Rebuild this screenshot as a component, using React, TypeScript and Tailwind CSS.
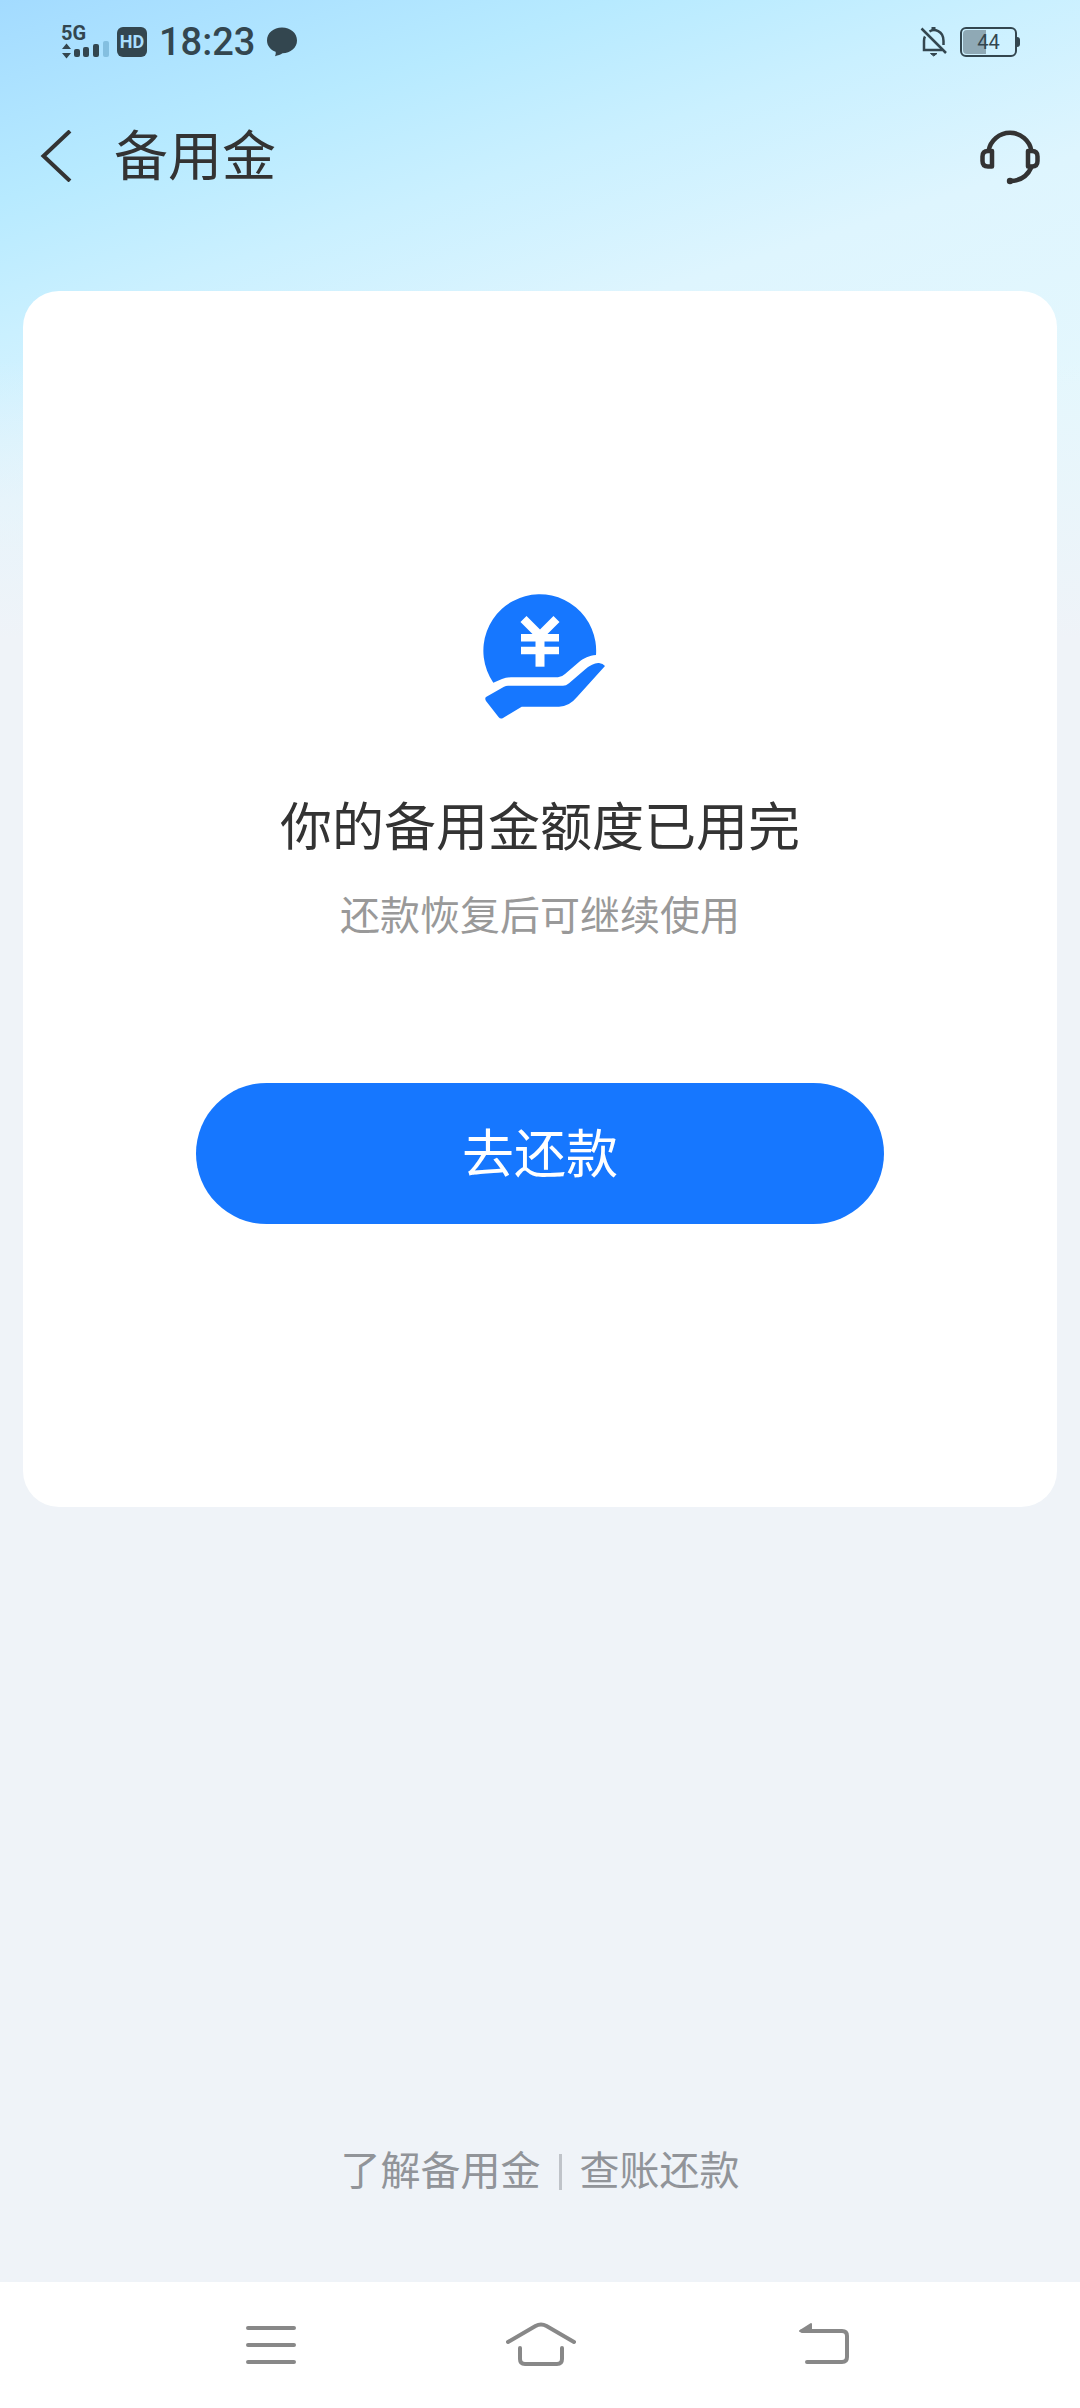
import type { FC } from "react";

const SignalIcon: FC = () => (
  <svg className="h-4 w-12 overflow-visible" viewBox="0 0 48 16" fill="currentColor" aria-hidden="true">
    <path d="M5.5 0.5 10 6H1Z M5.5 15.5 10 10H1Z" />
    <rect x="13" y="6" width="6" height="8" rx="2" />
    <rect x="22" y="4" width="6" height="10" rx="2" />
    <rect x="32" y="1" width="6" height="13" rx="2" />
    <rect x="42" y="-2" width="6" height="16" rx="2" className="fill-[#84bfe0]" />
  </svg>
);

const ChatIcon: FC = () => (
  <svg className="h-[30px] w-[30px]" viewBox="0 0 30 30" fill="currentColor" aria-hidden="true">
    <path d="M15 0.5C23.5 0.5 30 6 30 13.5S23.5 26 15.5 26.3C13.5 27.5 11 28.6 8 29.2 8.8 27.6 8.9 26 8.6 24.8 3.4 22.8 0 18.6 0 13.5 0 6 6.5 0.5 15 0.5Z" />
  </svg>
);

const MutedBellIcon: FC = () => (
  <svg
    className="h-[30px] w-7"
    viewBox="0 0 28 30"
    fill="none"
    stroke="currentColor"
    strokeWidth="2.5"
    aria-hidden="true"
  >
    <path d="M1.5 1.5 26 26" />
    <path d="M5 9.5C4 11 4 12.5 4 14V23H22" />
    <path d="M9.5 4.5C14 1.5 23.5 3.5 23.5 14V18" />
    <path d="M13.5 0V3" strokeWidth="4" />
    <path d="M10.5 26.5H17L13.7 29Z" fill="currentColor" strokeWidth="1" />
  </svg>
);

const BackIcon: FC = () => (
  <svg
    className="h-[52px] w-8"
    viewBox="0 0 32 52"
    fill="none"
    stroke="currentColor"
    strokeWidth="4"
    aria-hidden="true"
  >
    <path d="M30 1 3.5 26 30 51" />
  </svg>
);

const HeadsetIcon: FC = () => (
  <svg
    className="h-[58px] w-[60px]"
    viewBox="0 0 60 58"
    fill="none"
    stroke="currentColor"
    strokeWidth="4.5"
    strokeLinejoin="round"
    aria-hidden="true"
  >
    <path d="M8.5 24A21.8 21.8 0 0 1 51.5 24" />
    <path d="M12 24V39.5H8Q2.5 39.5 2.5 34V29.5Q2.5 24 8 24Z" />
    <path d="M48 24V39.5H52Q57.5 39.5 57.5 34V29.5Q57.5 24 52 24Z" />
    <path d="M51.5 40C47.5 49 40 54 30 54" strokeLinecap="round" />
    <circle cx="30" cy="54" r="3.2" fill="currentColor" stroke="none" />
  </svg>
);

const LoanIcon: FC = () => (
  <svg className="h-32 w-[132px]" viewBox="-9 0 132 128" fill="#1677ff" aria-hidden="true">
    <path d="M10.3 90.7A56.4 56.4 0 1 1 113 63C106 63.5 101 66 96 70L82 82Q78.5 85.3 75 85.3H28Q23 85.3 19 87Z" />
    <path d="M3 105 21 94.7Q23 93.7 25 93.7H80Q83 93.7 86 91.2L102 77.5Q110 70.5 116 71Q120 71.3 122 74L94 105Q86 114.7 76 114.7H38.7L20 126Q17.5 127.5 15.5 125L3 109Q1.5 106.5 3 105Z" />
    <g stroke="#fff" strokeWidth="8.5" fill="none">
      <path d="M40.5 27 57 43.5 73.5 27" />
      <path d="M38 45.8H76M38 58.5H76" strokeWidth="7.5" />
      <path d="M57 42V74.7" strokeWidth="9" />
    </g>
  </svg>
);

const StatusBar: FC = () => (
  <div className="flex h-[84px] items-center justify-between pr-15 pl-[61px] text-[#33464f]">
    <div className="flex items-center">
      <div className="flex w-12 flex-col gap-0.5">
        <span className="text-xl leading-4 font-bold">5G</span>
        <SignalIcon />
      </div>
      <span className="ml-2 flex h-[30px] w-[30px] items-center justify-center rounded-md bg-[#33464f] text-lg leading-none font-bold text-[#a9dfff]">
        HD
      </span>
      <span className="mx-3 text-[38px] leading-none font-medium">18:23</span>
      <ChatIcon />
    </div>
    <div className="flex items-center">
      <MutedBellIcon />
      <div className="relative ml-3 flex h-[30px] w-[57px] items-center justify-center rounded-md border-2 border-current p-px">
        <div className="absolute top-px bottom-px left-px rounded-l-sm bg-[#8fa9b5]" style={{ width: "44%" }} />
        <span className="relative text-xl leading-none">44</span>
      </div>
      <span className="h-2.5 w-[3px] rounded-r-sm bg-current" />
    </div>
  </div>
);

const NavBar: FC = () => (
  <nav className="flex h-[126px] items-center justify-center gap-[210px] bg-white pb-0.5 pl-4 text-[#888]">
    <button type="button" aria-label="菜单">
      <svg className="h-12 w-[50px]" viewBox="0 0 50 48" stroke="currentColor" strokeWidth="4" strokeLinecap="round">
        <path d="M2 8H48M2 25H48M2 42H48" />
      </svg>
    </button>
    <button type="button" aria-label="主页">
      <svg
        className="h-12 w-[70px]"
        viewBox="0 0 70 48"
        fill="none"
        stroke="currentColor"
        strokeWidth="4"
        strokeLinecap="round"
      >
        <path d="M2 22 29.5 6Q35 3 40.5 6L68 22" />
        <path d="M14 28V39Q14 44 19 44H51Q56 44 56 39V28" />
      </svg>
    </button>
    <button type="button" aria-label="返回" className="ml-3">
      <svg
        className="h-12 w-[52px]"
        viewBox="0 0 52 48"
        fill="none"
        stroke="currentColor"
        strokeWidth="4"
        strokeLinecap="round"
      >
        <path d="M9 42H44Q49 42 49 37V16Q49 11 44 11H4" />
        <path d="M2 11 13 4V11Z" fill="currentColor" strokeWidth="2" strokeLinejoin="round" />
      </svg>
    </button>
  </nav>
);

const App: FC = () => (
  <div className="flex min-h-screen flex-col bg-[#eff3f8] font-['Roboto','Noto_Sans_CJK_SC',sans-serif]">
    <div className="flex flex-1 flex-col bg-[linear-gradient(180deg,#eff3f800_360px,#eff3f8_640px),linear-gradient(162deg,#a3dbff_0px,#b7eaff_190px,#caf0ff_320px,#def5fe_480px,#e4f7fd_700px)] bg-[length:100%_640px] bg-no-repeat">
      <StatusBar />

      <header className="flex h-36 items-center pr-10 pl-10 text-[#333]">
        <button type="button" aria-label="返回">
          <BackIcon />
        </button>
        <h1 className="ml-[42px] flex-1 pt-1 text-[54px] leading-[72px]">备用金</h1>
        <button type="button" aria-label="客服">
          <HeadsetIcon />
        </button>
      </header>

      <main className="mx-[23px] mt-[63px] flex flex-col items-center rounded-[36px] bg-white px-6 pt-[301px] pb-[283px]">
        <LoanIcon />
        <h2 className="mt-[73px] text-[52px] leading-[72px] text-[#333]">你的备用金额度已用完</h2>
        <p className="mt-6 text-[40px] leading-[56px] text-[#999]">还款恢复后可继续使用</p>
        <button
          type="button"
          className="mt-[138px] h-[141px] w-full max-w-[688px] rounded-full bg-[#1677ff] pt-1 text-[52px] leading-[72px] text-white"
        >
          去还款
        </button>
      </main>

      <footer className="mt-auto flex items-center justify-center gap-[18px] pb-[82px] text-[40px] leading-[56px] text-[#919499]">
        <a href="#about">了解备用金</a>
        <span className="h-9 w-[3px] bg-[#bfc3c9]" />
        <a href="#repay">查账还款</a>
      </footer>
    </div>
    <NavBar />
  </div>
);

export default App;
